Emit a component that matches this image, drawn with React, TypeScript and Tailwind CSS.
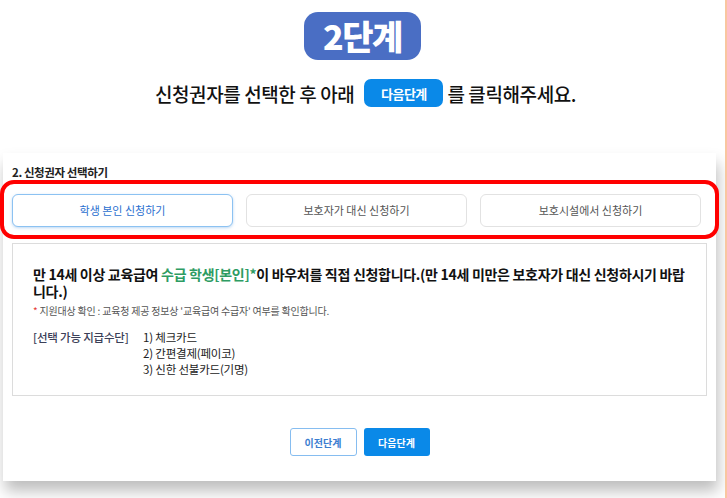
import React from "react";

const font = { fontFamily: '"Noto Sans CJK KR", "Noto Sans", sans-serif' };

export default function App() {
  return (
    <div className="relative flex w-[727px] h-[498px] overflow-hidden bg-white" style={font}>
      <div className="flex flex-col w-[725px] h-full">
        {/* header */}
        <div className="flex flex-col items-center pt-[12px]">
          <div className="flex items-center justify-center w-[117px] h-[48px] rounded-[14px] bg-[#4a6ec4] text-white text-[34px] font-black tracking-[-1.5px] leading-none">
            2단계
          </div>
          <div className="mt-[19px] flex items-center text-[19px] font-medium text-[#111] tracking-[-0.4px] leading-none pl-[6px]">
            <span>신청권자를 선택한 후 아래</span>
            <span className="ml-[10px] mr-[4px] flex items-center justify-center w-[79px] h-[28px] rounded-[7px] bg-[#0a89e8] text-white text-[13px] font-bold tracking-[-0.5px]">
              다음단계
            </span>
            <span>를 클릭해주세요.</span>
          </div>
        </div>

        {/* card */}
        <div className="ml-[3px] mt-[46px] w-[713px] h-[328px] bg-white shadow-[2px_10px_14px_rgba(0,0,0,0.26)] flex flex-col pl-[9px] pr-[15px] pt-[11px]">
          <div className="text-[11.5px] leading-[16px] font-semibold text-[#222] tracking-[-0.4px]">2. 신청권자 선택하기</div>
          <div className="mt-[14px] grid grid-cols-3 gap-[13px]">
            <button className="h-[33px] rounded-[6px] border border-[#8cc2f2] bg-white text-[11px] text-[#2b6fcf] shadow-[0_1px_3px_rgba(60,140,220,0.35)]">
              학생 본인 신청하기
            </button>
            <button className="h-[33px] rounded-[6px] border border-[#e2e2e2] bg-white text-[11px] text-[#555]">
              보호자가 대신 신청하기
            </button>
            <button className="h-[33px] rounded-[6px] border border-[#e2e2e2] bg-white text-[11px] text-[#555]">
              보호시설에서 신청하기
            </button>
          </div>

          <div className="mt-[16px] w-[695px] h-[153px] border border-[#dcdcdc] pl-[20px] pr-[16px] pt-[22px]">
            <p className="text-[14px] leading-[17px] font-bold text-[#111] tracking-[-0.3px]">
              만 14세 이상 교육급여 <span className="text-[#2e9c63]">수급 학생[본인]*</span>이 바우처를 직접 신청합니다.(만 14세 미만은 보호자가 대신 신청하시기 바랍니다.)
            </p>
            <p className="mt-[4px] text-[10px] leading-[14px] text-[#555] tracking-[-0.2px]">
              <span className="text-[#e53935]">*</span> 지원대상 확인 : 교육청 제공 정보상 '교육급여 수급자' 여부를 확인합니다.
            </p>
            <div className="mt-[11px] flex text-[11.5px] leading-[16px] tracking-[-0.2px]">
              <div className="w-[110px] text-[#3b4058] font-medium">[선택 가능 지급수단]</div>
              <div className="flex flex-col text-[#222]">
                <span>1) 체크카드</span>
                <span>2) 간편결제(페이코)</span>
                <span>3) 신한 선불카드(기명)</span>
              </div>
            </div>
          </div>

          <div className="mt-[32px] flex justify-center gap-[7px] pl-[6px]">
            <button className="w-[67px] h-[28px] rounded-[3px] border border-[#86bdf0] bg-white text-[10px] font-bold text-[#3b7dd0]">
              이전단계
            </button>
            <button className="w-[66px] h-[28px] rounded-[3px] bg-[#0a89e8] text-[10px] font-bold text-white">
              다음단계
            </button>
          </div>
        </div>
      </div>
      <div className="w-[2px] h-full bg-[#f9c6a0]" />

      {/* red annotation box */}
      <div className="absolute left-0 top-[180px] w-[719px] h-[59px] rounded-[14px] border-4 border-[#ff0000]" />
    </div>
  );
}
